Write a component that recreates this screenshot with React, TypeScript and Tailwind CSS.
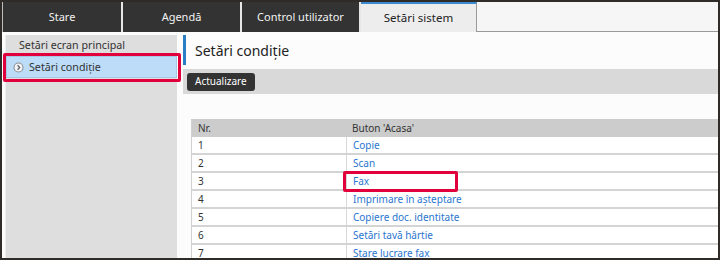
import React from "react";

const tabs = ["Stare", "Agendă", "Control utilizator"];

const rows = [
  { nr: "1", label: "Copie" },
  { nr: "2", label: "Scan" },
  { nr: "3", label: "Fax" },
  { nr: "4", label: "Imprimare în așteptare" },
  { nr: "5", label: "Copiere doc. identitate" },
  { nr: "6", label: "Setări tavă hârtie" },
  { nr: "7", label: "Stare lucrare fax" },
];

function CircleArrow() {
  return (
    <svg width="11" height="11" viewBox="0 0 12 12">
      <circle cx="6" cy="6" r="5.5" fill="#8a8f96" />
      <circle cx="6" cy="6" r="4.3" fill="#f4f4f4" />
      <path d="M5 3.6 L7.3 6 L5 8.4" fill="none" stroke="#5f656c" strokeWidth="1.4" />
    </svg>
  );
}

export default function App() {
  return (
    <div
      className="w-[720px] h-[260px] bg-[#2f2b29] p-[2px] overflow-hidden"
      style={{ fontFamily: "'Noto Sans', 'Open Sans', sans-serif" }}
    >
      <div className="relative flex h-full flex-col bg-[#fcfcfc] overflow-hidden">
        {/* tab bar */}
        <div className="flex h-[30px] shrink-0 border-l border-[#bdbdbd]">
          {tabs.map((t) => (
            <div
              key={t}
              className="flex w-[119px] items-center justify-center border-r-2 border-[#e6e6e6] bg-[#333333] text-[11px] text-[#f2f2f2] first:w-[120px]"
            >
              {t}
            </div>
          ))}
          <div className="flex w-[116px] items-center justify-center border-t-2 border-r border-t-[#3b89cf] border-r-[#9a9a9a] bg-[#ededed] text-[11.5px] text-[#222]">
            Setări sistem
          </div>
          <div className="flex-1 border-b border-[#9a9a9a] bg-[#f6f6f6]" />
        </div>

        {/* body */}
        <div className="flex flex-1 pt-[3px] pl-[3px] overflow-hidden">
          <div className="w-[172px] shrink-0 border-l border-[#eeeeee] bg-[#dedede] text-[10.7px] text-[#333]">
            <div className="flex h-[21px] items-center pl-[13px]">Setări ecran principal</div>
            <div className="flex h-[22px] items-center gap-[5px] border border-[#a9c7e4] bg-[#bcdcf8] pl-[6px]">
              <CircleArrow />
              <span>Setări condiție</span>
            </div>
          </div>

          <div className="ml-[6px] flex flex-1 flex-col overflow-hidden">
            <div className="flex h-[30px] shrink-0 items-center border-l-[3px] border-[#2a7ec6] pl-[9px] text-[14px] text-[#222]">
              Setări condiție
            </div>
            <div className="mt-[4px] flex h-[25px] shrink-0 items-center bg-[#d9d9d9] pl-[4px]">
              <button className="flex h-[18px] items-center rounded-[3px] bg-[#333333] px-[8px] text-[10px] text-white">
                Actualizare
              </button>
            </div>

            <div className="mt-[25px] ml-[8px] border-l border-[#d0d0d0] text-[10px]">
              <div className="flex h-[18px] bg-[#cccccc] text-[#333]">
                <div className="flex w-[154px] items-center pl-[6px]">Nr.</div>
                <div className="flex flex-1 items-center pl-[6px]">Buton 'Acasa'</div>
              </div>
              {rows.map((r) => (
                <div key={r.nr} className="flex h-[18px] border-b-2 border-[#d4d4d4] bg-white">
                  <div className="flex w-[154px] items-center pl-[6px] text-[#333]">{r.nr}</div>
                  <div className="flex flex-1 items-center border-l border-[#d8d8d8] pl-[6px] text-[#2a76cf]">
                    {r.label}
                  </div>
                </div>
              ))}
            </div>
          </div>
        </div>

        {/* highlight boxes */}
        <div className="absolute left-[1px] top-[51px] h-[29px] w-[178px] rounded-[2px] border-[3px] border-[#e2003c]" />
        <div className="absolute left-[341px] top-[169px] h-[21px] w-[115px] rounded-[2px] border-[3px] border-[#e2003c]" />
      </div>
    </div>
  );
}
